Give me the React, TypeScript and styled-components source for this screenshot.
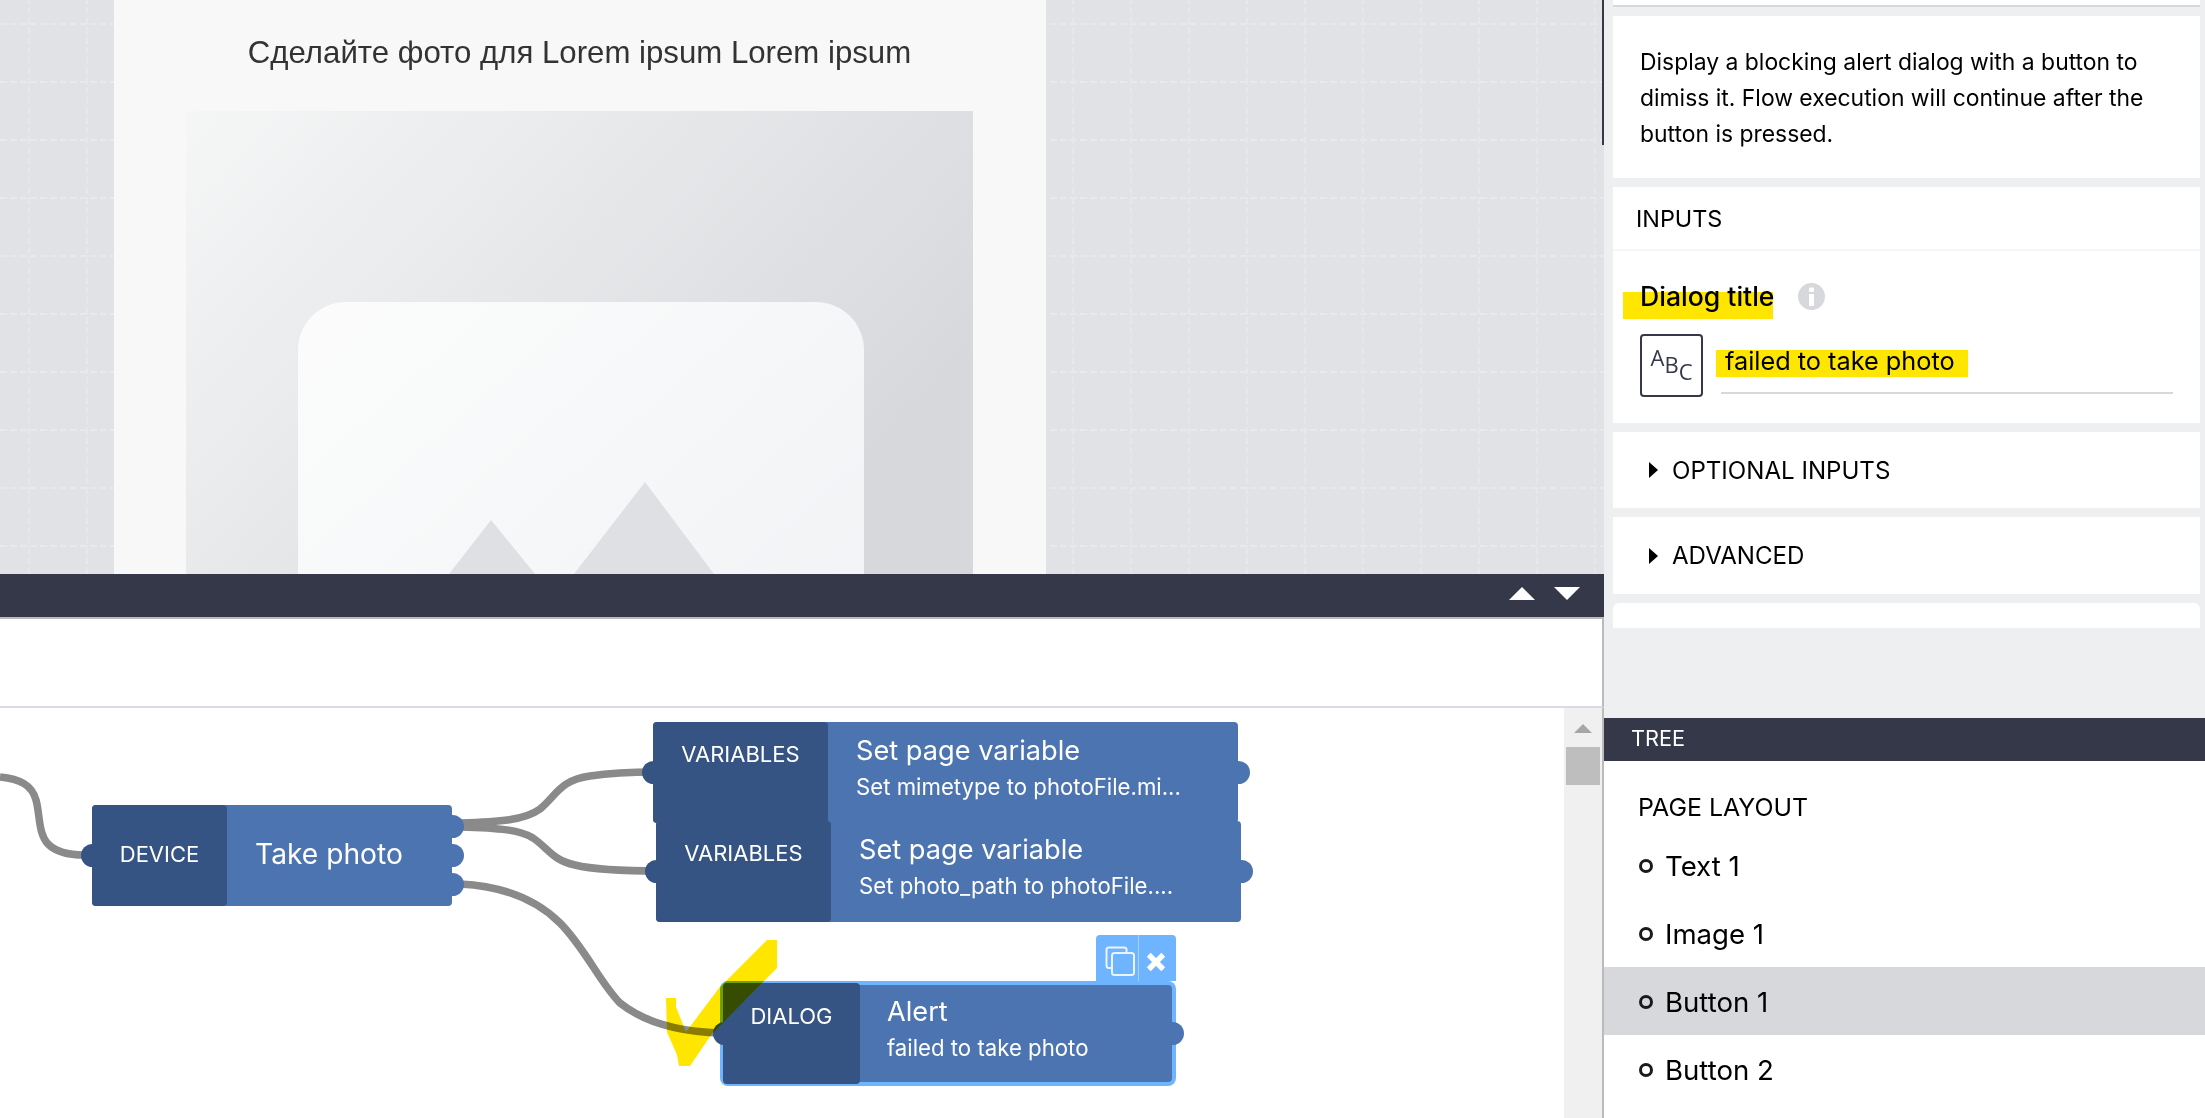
import React from "react";
import styled, { createGlobalStyle } from "styled-components";

const Global = createGlobalStyle`
  html, body { margin: 0; padding: 0; width: 2205px; height: 1118px; overflow: hidden; background: #fff; }
  * { box-sizing: border-box; }
`;

const UI = `"Inter", "Lato", sans-serif`;

const Page = styled.div`
  position: relative;
  display: grid;
  grid-template-columns: 1604px 601px;
  width: 2205px;
  height: 1118px;
  overflow: hidden;
  font-family: ${UI};
  color: #000;
`;

const Editor = styled.div`
  display: flex;
  flex-direction: column;
  height: 1118px;
`;

const Preview = styled.div`
  position: relative;
  height: 574px;
  padding: 0 558px 0 114px;
  overflow: hidden;
  background-color: #e1e2e6;

  &::before {
    content: "";
    position: absolute;
    inset: 0;
    background: repeating-linear-gradient(90deg, #e8e9eb 0 7px, transparent 7px 10px);
    -webkit-mask: linear-gradient(#000 2px, transparent 2px) 0 23px / 100% 58px;
    mask: linear-gradient(#000 2px, transparent 2px) 0 23px / 100% 58px;
  }

  &::after {
    content: "";
    position: absolute;
    inset: 0;
    background: repeating-linear-gradient(0deg, #e6e7e9 0 7px, transparent 7px 10px);
    -webkit-mask: linear-gradient(90deg, #000 2px, transparent 2px) 28px 0 / 58px 100%;
    mask: linear-gradient(90deg, #000 2px, transparent 2px) 28px 0 / 58px 100%;
  }
`;

const PreviewEdge = styled.span`
  position: absolute;
  z-index: 2;
  top: 0;
  right: 0;
  width: 2px;
  height: 145px;
  background: #343848;
`;

const Phone = styled.div`
  position: relative;
  z-index: 1;
  height: 574px;
  padding: 0 73px 0 72px;
  background: #f8f8f8;
`;

const PhoneTitle = styled.h1`
  margin: 0;
  height: 111px;
  padding-top: 33px;
  font: 400 31.2px/40px "Liberation Sans", Arial, sans-serif;
  color: #333;
  text-align: center;
`;

const Placeholder = styled.svg`
  display: block;
  width: 787px;
  height: 463px;
`;

const SplitBar = styled.div`
  display: flex;
  justify-content: flex-end;
  align-items: center;
  gap: 19px;
  height: 43px;
  padding: 0 24px 5px 0;
  background: #343848;
`;

const Arrow = styled.span<{ $down?: boolean }>`
  width: 0;
  height: 0;
  border-left: 13px solid transparent;
  border-right: 13px solid transparent;
  ${(p) => (p.$down ? "border-top: 13px solid #fff;" : "border-bottom: 13px solid #fff;")}
`;

const Toolbar = styled.div`
  height: 91px;
  flex: none;
  background: #fff;
  border-top: 2px solid #bbb;
  border-right: 2px solid #bbb;
  border-bottom: 2px solid #dadae2;
`;

const Canvas = styled.div`
  position: relative;
  flex: 1;
  display: flex;
  justify-content: flex-end;
  background: #fff;
  border-right: 2px solid #bbb;
`;

const Scrollbar = styled.div`
  width: 38px;
  padding: 16px 2px 0;
  display: flex;
  flex-direction: column;
  align-items: center;
  background: #f0f0f0;
`;

const ScrollUp = styled.span`
  width: 0;
  height: 0;
  border-left: 9px solid transparent;
  border-right: 9px solid transparent;
  border-bottom: 9px solid #a6a6a6;
  margin-bottom: 14px;
`;

const ScrollThumb = styled.span`
  width: 34px;
  height: 38px;
  background: #bebebe;
`;

const Wires = styled.svg`
  position: absolute;
  left: 0;
  top: 0;
  width: 1604px;
  height: 410px;
  overflow: visible;
`;

const Node = styled.div<{ $x: number; $y: number; $w: number; $h: number; $selected?: boolean }>`
  position: absolute;
  left: ${(p) => p.$x}px;
  top: ${(p) => p.$y}px;
  width: ${(p) => p.$w}px;
  height: ${(p) => p.$h}px;
  display: flex;
  border-radius: 4px;
  background: #4c74b1;
  color: #fff;
  ${(p) => (p.$selected ? "box-shadow: 0 0 0 4px #6fb4ff;" : "")}
`;

const NodeKind = styled.div<{ $w: number; $top?: boolean; $bleed?: boolean }>`
  width: ${(p) => p.$w}px;
  flex: none;
  display: flex;
  justify-content: center;
  align-items: ${(p) => (p.$top ? "flex-start" : "center")};
  padding-top: ${(p) => (p.$top ? (p.$bleed ? "21px" : "20px") : "0")};
  padding-bottom: ${(p) => (p.$top ? "0" : "3px")};
  ${(p) => (p.$bleed ? "margin: -2px 0 -2px -1px;" : "")}
  border-radius: 4px;
  background: #365483;
  font-size: 22px;
  line-height: 24px;
`;

const NodeBody = styled.div<{ $pad: number; $tight?: boolean }>`
  flex: 1;
  min-width: 0;
  padding: ${(p) => (p.$tight ? "11px" : "13px")} 0 0 ${(p) => p.$pad}px;
`;

const NodeTitle = styled.div`
  font-size: 27.2px;
  line-height: 32px;
`;

const NodeSub = styled.div`
  margin-top: 6px;
  font-size: 22.2px;
  line-height: 28px;
`;

const NodeSingle = styled.div<{ $pad: number }>`
  flex: 1;
  display: flex;
  align-items: center;
  padding: 0 0 3px ${(p) => p.$pad}px;
  font-size: 28.2px;
`;

const Port = styled.span<{ $side: "left" | "right"; $y: number }>`
  position: absolute;
  top: ${(p) => p.$y - 11}px;
  ${(p) => (p.$side === "left" ? "left: -11px;" : "right: -12px;")}
  width: 23px;
  height: 23px;
  border-radius: 50%;
  background: ${(p) => (p.$side === "left" ? "#365483" : "#4c74b1")};
`;

const NodeTools = styled.div`
  position: absolute;
  right: -4px;
  top: -50px;
  width: 80px;
  height: 46px;
  display: flex;
  background: #6fb4ff;
  border-radius: 4px 4px 0 0;
`;

const ToolCell = styled.div<{ $first?: boolean }>`
  flex: ${(p) => (p.$first ? "0 0 43px" : "1")};
  display: flex;
  align-items: center;
  justify-content: center;
  padding-top: ${(p) => (p.$first ? "6px" : "8px")};
  padding-left: ${(p) => (p.$first ? "5px" : "0")};
  padding-right: ${(p) => (p.$first ? "0" : "4px")};
  ${(p) => (p.$first ? "border-right: 1px solid #a3cfff;" : "")}
`;

const Highlighter = styled.svg`
  position: absolute;
  left: 0;
  top: 0;
  width: 2205px;
  height: 1118px;
  mix-blend-mode: multiply;
  pointer-events: none;
`;

const Side = styled.aside`
  display: flex;
  flex-direction: column;
  height: 1118px;
`;

const Inspector = styled.div`
  height: 718px;
  flex: none;
  display: flex;
  flex-direction: column;
  gap: 9px;
  padding: 0 5px 0 9px;
  overflow: hidden;
  background: #eeeff1;
`;

const TopStub = styled.div`
  height: 7px;
  flex: none;
  background: #fff;
  border-bottom: 2px solid #d7d8db;
`;

const Card = styled.section<{ $h: number }>`
  height: ${(p) => p.$h}px;
  flex: none;
  background: #fff;
`;

const Description = styled.p`
  margin: 0;
  padding: 28px 50px 0 27px;
  font-size: 22.9px;
  line-height: 36px;
`;

const CardHead = styled.div`
  height: 64px;
  padding-left: 23px;
  display: flex;
  align-items: center;
  border-bottom: 2px solid #f6f6f7;
  font-size: 23.4px;
`;

const FieldBody = styled.div`
  padding: 28px 27px 0;
`;

const FieldLabel = styled.div`
  display: flex;
  align-items: center;
  gap: 24px;
  height: 34px;
  font-size: 26.6px;
  font-weight: 500;
`;

const InfoIcon = styled.svg`
  width: 27px;
  height: 27px;
  flex: none;
`;

const FieldRow = styled.div`
  display: flex;
  margin-top: 21px;
`;

const TypeBox = styled.div`
  width: 63px;
  height: 63px;
  flex: none;
  border: 2px solid #343848;
  border-radius: 4px;
  display: flex;
  justify-content: center;
  padding-top: 10px;
  font: 400 22px/1 "Open Sans", sans-serif;
  color: #343848;
`;

const TypeLetter = styled.span<{ $dy: number }>`
  display: block;
  transform: translateY(${(p) => p.$dy}px);
`;

const FieldInput = styled.div`
  flex: 1;
  margin-left: 18px;
  height: 60px;
  padding: 12px 0 0 4px;
  border-bottom: 2px solid #d7d8db;
  font-size: 25.3px;
  line-height: 30px;
`;

const Disclosure = styled.div`
  height: 100%;
  display: flex;
  align-items: center;
  gap: 14px;
  padding-left: 36px;
  font-size: 24.1px;
`;

const Caret = styled.span`
  width: 0;
  height: 0;
  border-top: 8.5px solid transparent;
  border-bottom: 8.5px solid transparent;
  border-left: 9px solid #000;
`;

const StubCard = styled.div`
  height: 25px;
  flex: none;
  background: #fff;
  border-radius: 6px 6px 0 0;
`;

const TreeHead = styled.div`
  height: 43px;
  flex: none;
  display: flex;
  align-items: center;
  padding: 0 0 4px 27px;
  background: #343848;
  color: #fff;
  font-size: 21.7px;
`;

const Tree = styled.div`
  flex: 1;
  background: #fff;
`;

const TreeTitle = styled.div`
  height: 70px;
  padding: 30px 0 0 34px;
  font-size: 24.9px;
  line-height: 32px;
`;

const TreeRow = styled.div<{ $active?: boolean }>`
  height: 68px;
  display: flex;
  align-items: center;
  gap: 12px;
  padding: 2px 0 0 35px;
  font-size: 27.6px;
  background: ${(p) => (p.$active ? "#d7d8db" : "transparent")};
`;

const Bullet = styled.span`
  width: 14px;
  height: 14px;
  border: 3px solid #1a1a1a;
  border-radius: 50%;
`;

const CANVAS_TOP = 708;

export default function App() {
  return (
    <Page>
      <Global />
      <Editor>
        <Preview>
          <Phone>
            <PhoneTitle>Сделайте фото для Lorem ipsum Lorem ipsum</PhoneTitle>
            <Placeholder viewBox="0 0 787 463">
              <defs>
                <linearGradient id="bgGrad" x1="0" y1="0" x2="1" y2="0.55">
                  <stop offset="0" stopColor="#f5f6f6" />
                  <stop offset="1" stopColor="#d6d8dc" />
                </linearGradient>
                <linearGradient id="cardGrad" x1="0" y1="0" x2="1" y2="0.8">
                  <stop offset="0" stopColor="#fbfcfb" />
                  <stop offset="1" stopColor="#f2f3f6" />
                </linearGradient>
              </defs>
              <rect width="787" height="463" fill="url(#bgGrad)" />
              <rect x="112" y="191" width="566" height="400" rx="48" fill="url(#cardGrad)" />
              <path d="M305 409 L263 463 L349 463 Z" fill="#dfe0e3" />
              <path d="M459 371 L388 463 L528 463 Z" fill="#dfe0e3" />
            </Placeholder>
          </Phone>
          <PreviewEdge />
        </Preview>
        <SplitBar>
          <Arrow />
          <Arrow $down />
        </SplitBar>
        <Toolbar />
        <Canvas>
          <Wires viewBox="0 0 1604 410">
            <g fill="none" stroke="#8a8a8a" strokeWidth="7.5">
              <path d="M0 69 C20 71 32 77 36 92 C40 106 38 125 48 136 C56 144 70 147 84 147" />
              <path d="M460 115 C500 114 525 112 540 101 C556 88 560 72 590 68 C610 65 630 64 655 64" />
              <path d="M460 119 C500 120 520 122 533 130 C548 140 552 152 575 157 C595 162 625 163 660 163" />
              <path d="M460 176 C500 178 535 190 560 215 C585 240 600 275 620 295 C645 315 680 324 722 325" />
            </g>
          </Wires>
          <Node $x={92} $y={805 - CANVAS_TOP} $w={360} $h={101}>
            <NodeKind $w={135}>DEVICE</NodeKind>
            <NodeSingle $pad={28}>Take photo</NodeSingle>
            <Port $side="left" $y={50} />
            <Port $side="right" $y={21} />
            <Port $side="right" $y={50} />
            <Port $side="right" $y={79} />
          </Node>
          <Node $x={653} $y={722 - CANVAS_TOP} $w={585} $h={101}>
            <NodeKind $w={175} $top>VARIABLES</NodeKind>
            <NodeBody $pad={28}>
              <NodeTitle>Set page variable</NodeTitle>
              <NodeSub>Set mimetype to photoFile.mi...</NodeSub>
            </NodeBody>
            <Port $side="left" $y={50} />
            <Port $side="right" $y={50} />
          </Node>
          <Node $x={656} $y={821 - CANVAS_TOP} $w={585} $h={101}>
            <NodeKind $w={175} $top>VARIABLES</NodeKind>
            <NodeBody $pad={28}>
              <NodeTitle>Set page variable</NodeTitle>
              <NodeSub>Set photo_path to photoFile....</NodeSub>
            </NodeBody>
            <Port $side="left" $y={50} />
            <Port $side="right" $y={50} />
          </Node>
          <Node $x={724} $y={985 - CANVAS_TOP} $w={448} $h={97} $selected>
            <NodeKind $w={137} $top $bleed>DIALOG</NodeKind>
            <NodeBody $pad={27} $tight>
              <NodeTitle>Alert</NodeTitle>
              <NodeSub>failed to take photo</NodeSub>
            </NodeBody>
            <Port $side="left" $y={48} />
            <Port $side="right" $y={48} />
            <NodeTools>
              <ToolCell $first>
                <svg width="30" height="30" viewBox="0 0 30 30" fill="none" stroke="#eaf4ff" strokeWidth="2">
                  <path d="M6 22 H4 Q1.5 22 1.5 19.5 V3.5 Q1.5 1.5 4 1.5 H19 Q21.5 1.5 21.5 3.5 V7" />
                  <rect x="7" y="7" width="22" height="22" rx="2.5" />
                </svg>
              </ToolCell>
              <ToolCell>
                <svg width="20" height="20" viewBox="0 0 22 22" stroke="#fff" strokeWidth="6">
                  <path d="M3 3 L19 19 M19 3 L3 19" />
                </svg>
              </ToolCell>
            </NodeTools>
          </Node>
          <Scrollbar>
            <ScrollUp />
            <ScrollThumb />
          </Scrollbar>
        </Canvas>
      </Editor>
      <Side>
        <Inspector>
          <TopStub />
          <Card $h={162}>
            <Description>
              Display a blocking alert dialog with a button to dimiss it. Flow execution will continue after the button is pressed.
            </Description>
          </Card>
          <Card $h={236}>
            <CardHead>INPUTS</CardHead>
            <FieldBody>
              <FieldLabel>
                Dialog title
                <InfoIcon viewBox="0 0 27 27">
                  <circle cx="13.5" cy="13.5" r="13.5" fill="#d7d8db" />
                  <rect x="11" y="4.5" width="5" height="4.5" rx="1" fill="#fff" />
                  <rect x="11" y="11" width="5" height="12" fill="#fff" />
                </InfoIcon>
              </FieldLabel>
              <FieldRow>
                <TypeBox>
                  <TypeLetter $dy={0}>A</TypeLetter>
                  <TypeLetter $dy={7}>B</TypeLetter>
                  <TypeLetter $dy={14}>C</TypeLetter>
                </TypeBox>
                <FieldInput>failed to take photo</FieldInput>
              </FieldRow>
            </FieldBody>
          </Card>
          <Card $h={76}>
            <Disclosure>
              <Caret />
              OPTIONAL INPUTS
            </Disclosure>
          </Card>
          <Card $h={77}>
            <Disclosure>
              <Caret />
              ADVANCED
            </Disclosure>
          </Card>
          <StubCard />
        </Inspector>
        <TreeHead>TREE</TreeHead>
        <Tree>
          <TreeTitle>PAGE LAYOUT</TreeTitle>
          <TreeRow>
            <Bullet />
            Text 1
          </TreeRow>
          <TreeRow>
            <Bullet />
            Image 1
          </TreeRow>
          <TreeRow $active>
            <Bullet />
            Button 1
          </TreeRow>
          <TreeRow>
            <Bullet />
            Button 2
          </TreeRow>
        </Tree>
      </Side>
      <Highlighter viewBox="0 0 2205 1118">
        <g fill="#ffe600">
          <rect x="1623" y="292" width="150" height="27" />
          <rect x="1716" y="350" width="252" height="27" />
          <path d="M666 998 L676 998 L676 1007 L686 1032 L719 988 L767 940 L777 940 L777 968 L747 998 L711 1035 L690 1066 L679 1066 L677 1055 L667 1032 Z" />
        </g>
      </Highlighter>
    </Page>
  );
}
